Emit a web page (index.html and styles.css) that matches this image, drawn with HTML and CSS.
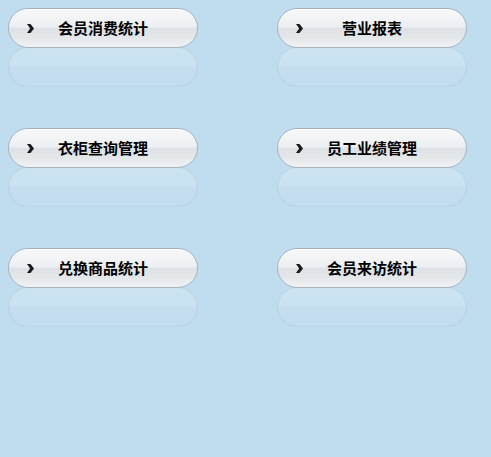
FILE: index.html
```html
<!DOCTYPE html>
<html lang="zh">
<head>
<meta charset="utf-8">
<link rel="stylesheet" href="styles.css">
</head>
<body>
<div class="grid">
  <div class="item"><a class="btn"><span class="chev"></span><span class="label">会员消费统计</span></a><div class="refl"></div></div>
  <div class="item"><a class="btn"><span class="chev"></span><span class="label">营业报表</span></a><div class="refl"></div></div>
  <div class="item"><a class="btn"><span class="chev"></span><span class="label">衣柜查询管理</span></a><div class="refl"></div></div>
  <div class="item"><a class="btn"><span class="chev"></span><span class="label">员工业绩管理</span></a><div class="refl"></div></div>
  <div class="item"><a class="btn"><span class="chev"></span><span class="label">兑换商品统计</span></a><div class="refl"></div></div>
  <div class="item"><a class="btn"><span class="chev"></span><span class="label">会员来访统计</span></a><div class="refl"></div></div>
</div>
</body>
</html>
```
FILE: styles.css
```css
html, body {
  margin: 0;
  padding: 0;
  background: #bfddef;
  height: 100%;
}
body {
  font-family: "Noto Sans CJK SC", "Noto Sans", sans-serif;
}
.grid {
  display: grid;
  grid-template-columns: 190px 190px;
  column-gap: 79px;
  row-gap: 41px;
  padding: 8px 0 0 8px;
}
.item {
  display: flex;
  flex-direction: column;
}
.btn {
  position: relative;
  z-index: 1;
  box-sizing: border-box;
  height: 40px;
  border: 1px solid #a6b3bc;
  border-radius: 20px;
  background: linear-gradient(to bottom, #f7f8f9 0%, #eceff1 48%, #dde1e5 50%, #e4e7ea 75%, #eff1f3 100%);
  box-shadow: inset 0 1px 0 #ffffff;
  display: flex;
  align-items: center;
  justify-content: center;
}
.chev {
  position: absolute;
  left: 18px;
  top: 15px;
  width: 7px;
  height: 9px;
  background: #1a1a1a;
  clip-path: polygon(0 0, 50% 0, 100% 50%, 50% 100%, 0 100%, 45% 50%);
}
.label {
  font-size: 15px;
  font-weight: bold;
  color: #000;
  line-height: 16px;
}
.refl {
  box-sizing: border-box;
  height: 40px;
  margin-top: -1px;
  border: 1px solid rgba(150, 178, 196, 0.28);
  border-radius: 20px;
  background: linear-gradient(to bottom, #cce3f1 0%, #c9e2f1 45%, #c4def0 52%, #c2ddef 100%);
}
```
